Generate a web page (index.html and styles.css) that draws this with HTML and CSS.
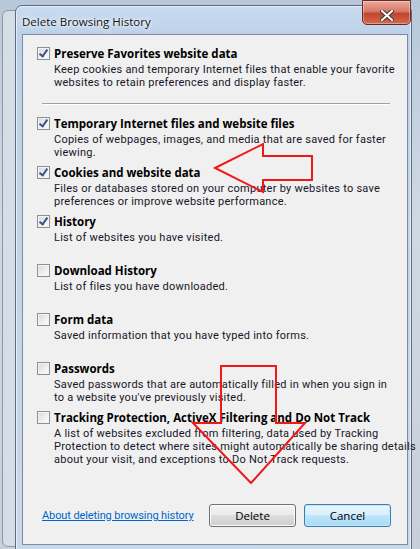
FILE: index.html
```html
<!DOCTYPE html>
<html lang="en">
<head>
    <meta charset="UTF-8">
    <meta name="viewport" content="width=device-width, initial-scale=1.0">
    <title>Delete Browsing History</title>
    <link rel="stylesheet" href="styles.css">
</head>
<body>
    <div class="back-window"></div>
    <div class="window">
        <div class="titlebar">
            <span class="title">Delete Browsing History</span>
            <button class="close" aria-label="Close">
                <svg width="14" height="11" viewBox="0 0 14 11">
                    <path d="M2 1 L12 10 M12 1 L2 10" stroke="#3a3a3a" stroke-width="4" stroke-linecap="square"/>
                    <path d="M2 1 L12 10 M12 1 L2 10" stroke="#ffffff" stroke-width="2" stroke-linecap="square"/>
                </svg>
            </button>
        </div>
        <div class="panel">
            <div class="item">
                <div class="head"><span class="box checked"></span>Preserve Favorites website data</div>
                <p class="desc">Keep cookies and temporary Internet files that enable your favorite<br>websites to retain preferences and display faster.</p>
            </div>
            <div class="sep"></div>
            <div class="item">
                <div class="head"><span class="box checked"></span>Temporary Internet files and website files</div>
                <p class="desc">Copies of webpages, images, and media that are saved for faster<br>viewing.</p>
            </div>
            <div class="item">
                <div class="head"><span class="box checked"></span>Cookies and website data</div>
                <p class="desc">Files or databases stored on your computer by websites to save<br>preferences or improve website performance.</p>
            </div>
            <div class="item">
                <div class="head"><span class="box checked"></span>History</div>
                <p class="desc">List of websites you have visited.</p>
            </div>
            <div class="item">
                <div class="head"><span class="box"></span>Download History</div>
                <p class="desc">List of files you have downloaded.</p>
            </div>
            <div class="item">
                <div class="head"><span class="box"></span>Form data</div>
                <p class="desc">Saved information that you have typed into forms.</p>
            </div>
            <div class="item">
                <div class="head"><span class="box"></span>Passwords</div>
                <p class="desc">Saved passwords that are automatically filled in when you sign in<br>to a website you've previously visited.</p>
            </div>
            <div class="item">
                <div class="head"><span class="box"></span>Tracking Protection, ActiveX Filtering and Do Not Track</div>
                <p class="desc">A list of websites excluded from filtering, data used by Tracking<br>Protection to detect where sites might automatically be sharing details<br>about your visit, and exceptions to Do Not Track requests.</p>
            </div>
            <div class="footer">
                <a class="help" href="#">About deleting browsing history</a>
                <div class="buttons">
                    <button class="btn">Delete</button>
                    <button class="btn default">Cancel</button>
                </div>
            </div>
        </div>
    </div>

    <!-- red arrows drawn over the screenshot -->
    <svg class="marks" width="420" height="549" viewBox="0 0 420 549">
        <polygon points="215,168 263,144 263,156 312,156 312,180 263,180 263,192" fill="none" stroke="#f01818" stroke-width="2"/>
        <polygon points="221,366 276,366 276,423 305,423 251,483 193,423 221,423" fill="none" stroke="#f01818" stroke-width="2"/>
    </svg>
</body>
</html>
```

FILE: styles.css
```css
body {
    margin: 0;
    width: 420px;
    height: 549px;
    overflow: hidden;
    position: relative;
    font-family: "Open Sans", "Noto Sans", Arial, sans-serif;
    background: linear-gradient(to bottom, #b8c8da, #cfd9e4 40%, #c7d0da);
}

.back-window {
    position: absolute;
    left: 2px;
    top: 10px;
    width: 40px;
    height: 535px;
    border: 1px solid #8d98a6;
    border-radius: 6px;
    background: #d5dde6;
}

.window {
    position: relative;
    margin: 5px 0 0 15px;
    width: 397px;
    height: 560px;
    box-sizing: border-box;
    padding: 0 3px 0 6px;
    border: 1px solid #5d6b7d;
    border-radius: 7px 7px 0 0;
    background: linear-gradient(to bottom, #c9dbef, #bcd1ea 30px, #c1d4ea 200px, #c8d9ec);
    box-shadow: inset 0 0 0 1px rgba(255, 255, 255, 0.6);
}

.titlebar {
    height: 28px;
    display: flex;
    align-items: center;
}

.title {
    font-size: 11.5px;
    color: #111;
    margin-top: 2px;
    text-shadow: 0 0 6px #fff, 0 0 3px #fff;
}

.close {
    position: absolute;
    top: -6px;
    right: 0;
    width: 49px;
    height: 25px;
    border: 1px solid #6a2a22;
    border-radius: 0 0 5px 5px;
    background: linear-gradient(to bottom, #e7a99b, #d77a66 45%, #c2442c 55%, #d56a4c);
    box-shadow: inset 0 0 0 1px rgba(255, 255, 255, 0.35);
    padding: 6px 0 0;
    display: flex;
    justify-content: center;
    align-items: center;
}

.panel {
    height: 511px;
    box-sizing: border-box;
    border: 1px solid #7f8b99;
    background: #f0f0f0;
    padding: 10px 0 0 14px;
    display: flex;
    flex-direction: column;
}

.item {
    min-height: 44px;
    margin-bottom: 5px;
}

.head {
    display: flex;
    align-items: center;
    height: 16px;
    font-size: 11.5px;
    font-weight: 700;
    color: #000;
    white-space: nowrap;
}

.box {
    width: 11px;
    height: 11px;
    margin-right: 4px;
    border: 1px solid #8e8f8f;
    background: linear-gradient(135deg, #d8d8d8, #f4f4f4 70%, #fafafa);
    box-shadow: inset 0 0 0 1px #f4f4f4;
    flex: none;
    position: relative;
}

.box.checked::after {
    content: "";
    position: absolute;
    left: 3px;
    top: 0;
    width: 3px;
    height: 7px;
    border: solid #3c4f8e;
    border-width: 0 2px 2px 0;
    transform: rotate(35deg);
}

.desc {
    margin: 2px 0 0 17px;
    font-family: Roboto, "Open Sans", sans-serif;
    font-size: 11px;
    line-height: 13px;
    letter-spacing: 0.25px;
    color: #161628;
    white-space: nowrap;
}

.sep {
    height: 1px;
    background: #a0a0a0;
    box-shadow: 0 1px 0 #fff;
    margin: 9px 17px 11px 5px;
}

.footer {
    margin-top: auto;
    display: flex;
    align-items: center;
    justify-content: space-between;
    padding: 0 16px 17px 5px;
}

.help {
    font-family: Roboto, "Open Sans", sans-serif;
    font-size: 11px;
    letter-spacing: -0.1px;
    color: #0066cc;
}

.buttons {
    display: flex;
    gap: 8px;
}

.btn {
    width: 87px;
    height: 23px;
    font-family: inherit;
    font-size: 11.5px;
    color: #000;
    border: 1px solid #707070;
    border-radius: 3px;
    background: linear-gradient(to bottom, #f2f2f2, #ebebeb 50%, #dddddd 50%, #cfcfcf);
    box-shadow: inset 0 0 0 1px #fcfcfc;
}

.btn.default {
    border-color: #3c7fb1;
    background: linear-gradient(to bottom, #eaf6fd, #d9f0fc 50%, #bee6fd 50%, #a7d9f5);
    box-shadow: inset 0 0 0 1px #c0e8fc;
}

.marks {
    position: absolute;
    left: 0;
    top: 0;
    pointer-events: none;
}
```
